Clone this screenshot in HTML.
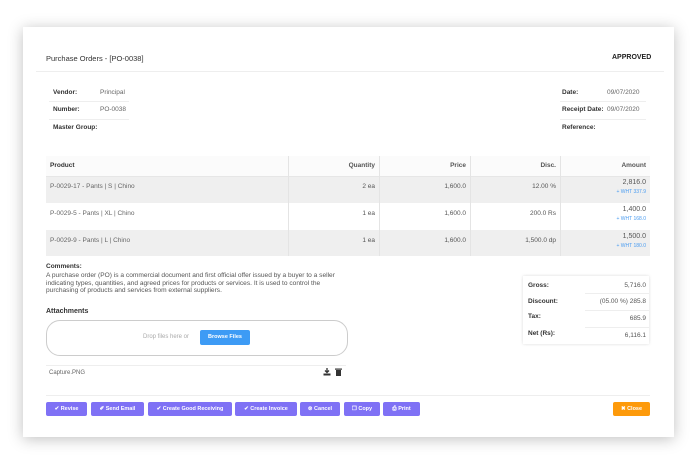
<!DOCTYPE html><html><head><style>
body{margin:0;width:699px;height:466px;background:#fff;font-family:"Liberation Sans",sans-serif;position:relative;overflow:hidden;color:#444}
.card{position:absolute;left:23px;top:27px;width:651px;height:410px;background:#fff;box-shadow:0 2px 14px rgba(0,0,0,.25)}
.a{position:absolute;white-space:nowrap}
.t{font-size:7px;color:#333}
.b{font-weight:bold;font-size:6.5px;color:#333}
.v{font-size:6.5px;color:#666}
.hl{position:absolute;height:1px;background:#eee}
.btn{position:absolute;top:402px;height:14px;background:#7f71f5;color:#fff;font-size:5.5px;font-weight:bold;border-radius:2px;text-align:center;line-height:14px}
.cell{position:absolute;font-size:6.5px;color:#555;text-align:right}
</style></head><body>
<div class="card"></div>
<div class="a t" style="left:46px;top:54px;font-size:7.5px">Purchase Orders - [PO-0038]</div>
<div class="a t" style="left:612px;top:54px;font-size:7px;font-weight:bold;color:#222">APPROVED</div>
<div class="hl" style="left:36px;top:71px;width:628px"></div>
<div class="a b" style="left:53px;top:89px">Vendor:</div><div class="a v" style="left:100px;top:89px">Principal</div>
<div class="hl" style="left:49px;top:101px;width:80px"></div>
<div class="a b" style="left:53px;top:106px">Number:</div><div class="a v" style="left:100px;top:106px">PO-0038</div>
<div class="hl" style="left:49px;top:119px;width:80px"></div>
<div class="a b" style="left:53px;top:124px">Master Group:</div>
<div class="a b" style="left:562px;top:89px">Date:</div><div class="a v" style="left:607px;top:89px">09/07/2020</div>
<div class="hl" style="left:560px;top:101px;width:86px"></div>
<div class="a b" style="left:562px;top:106px">Receipt Date:</div><div class="a v" style="left:607px;top:106px">09/07/2020</div>
<div class="hl" style="left:560px;top:119px;width:86px"></div>
<div class="a b" style="left:562px;top:124px">Reference:</div>
<div style="position:absolute;left:46px;top:156px;width:604px;height:20px;background:#fbfbfb;border-bottom:1px solid #e6e6e6"></div>
<div style="position:absolute;left:46px;top:177px;width:604px;height:26px;background:#efefef"></div>
<div style="position:absolute;left:46px;top:230px;width:604px;height:26px;background:#efefef"></div>
<div style="position:absolute;left:288px;top:156px;width:1px;height:100px;background:#e4e4e4"></div>
<div style="position:absolute;left:379px;top:156px;width:1px;height:100px;background:#e4e4e4"></div>
<div style="position:absolute;left:470px;top:156px;width:1px;height:100px;background:#e4e4e4"></div>
<div style="position:absolute;left:560px;top:156px;width:1px;height:100px;background:#e4e4e4"></div>
<div class="a b" style="left:50px;top:162px">Product</div>
<div class="cell b" style="left:290px;width:85px;top:162px">Quantity</div>
<div class="cell b" style="left:381px;width:85px;top:162px">Price</div>
<div class="cell b" style="left:472px;width:84px;top:162px">Disc.</div>
<div class="cell b" style="left:562px;width:84px;top:162px">Amount</div>

<div class="a v" style="left:50px;top:183px">P-0029-17 - Pants | S | Chino</div>
<div class="cell" style="left:290px;width:85px;top:183px">2 ea</div>
<div class="cell" style="left:381px;width:85px;top:183px">1,600.0</div>
<div class="cell" style="left:472px;width:84px;top:183px">12.00 %</div>
<div class="cell" style="left:562px;width:84px;top:179px;font-size:7px">2,816.0</div>
<div class="cell" style="left:562px;width:84px;top:189px;font-size:5px;color:#4a9cf0">+ WHT 337.9</div>

<div class="a v" style="left:50px;top:210px">P-0029-5 - Pants | XL | Chino</div>
<div class="cell" style="left:290px;width:85px;top:210px">1 ea</div>
<div class="cell" style="left:381px;width:85px;top:210px">1,600.0</div>
<div class="cell" style="left:472px;width:84px;top:210px">200.0 Rs</div>
<div class="cell" style="left:562px;width:84px;top:206px;font-size:7px">1,400.0</div>
<div class="cell" style="left:562px;width:84px;top:216px;font-size:5px;color:#4a9cf0">+ WHT 168.0</div>

<div class="a v" style="left:50px;top:237px">P-0029-9 - Pants | L | Chino</div>
<div class="cell" style="left:290px;width:85px;top:237px">1 ea</div>
<div class="cell" style="left:381px;width:85px;top:237px">1,600.0</div>
<div class="cell" style="left:472px;width:84px;top:237px">1,500.0 dp</div>
<div class="cell" style="left:562px;width:84px;top:233px;font-size:7px">1,500.0</div>
<div class="cell" style="left:562px;width:84px;top:243px;font-size:5px;color:#4a9cf0">+ WHT 180.0</div>

<div class="a b" style="left:46px;top:263px">Comments:</div>
<div class="a v" style="left:46px;top:272px;line-height:7.7px;font-size:6.6px;color:#555">A purchase order (PO) is a commercial document and first official offer issued by a buyer to a seller<br>indicating types, quantities, and agreed prices for products or services. It is used to control the<br>purchasing of products and services from external suppliers.</div>
<div class="a b" style="left:46px;top:308px;font-size:7px">Attachments</div>
<div style="position:absolute;left:46px;top:320px;width:300px;height:34px;border:1px solid #ccc;border-radius:14px"></div>
<div class="a v" style="left:143px;top:334px;color:#aaa;font-size:6px">Drop files here or</div>
<div style="position:absolute;left:200px;top:330px;width:50px;height:15px;background:#3d9bf5;border-radius:2px;color:#fff;font-size:5.5px;font-weight:bold;text-align:center;line-height:15px">Browse Files</div>
<div class="hl" style="left:46px;top:365px;width:300px"></div>
<div class="a v" style="left:49px;top:370px;font-size:6px">Capture.PNG</div>
<svg style="position:absolute;left:323px;top:368px" width="8" height="8" viewBox="0 0 8 8"><path d="M4 0v4M2 2.5L4 4.5 6 2.5" stroke="#333" stroke-width="1.3" fill="none"/><rect x="0.5" y="5.5" width="7" height="2" fill="#333"/></svg>
<svg style="position:absolute;left:335px;top:368px" width="7" height="8" viewBox="0 0 7 8"><rect x="0" y="0.5" width="7" height="1.2" fill="#333"/><rect x="1" y="2" width="5" height="6" fill="#333"/></svg>
<div style="position:absolute;left:523px;top:276px;width:126px;height:68px;box-shadow:0 0 3px rgba(0,0,0,.15)"></div>
<div class="a b" style="left:528px;top:282px">Gross:</div><div class="cell" style="left:585px;width:61px;top:282px">5,716.0</div>
<div class="hl" style="left:585px;top:293px;width:64px"></div>
<div class="a b" style="left:528px;top:298px">Discount:</div><div class="cell" style="left:570px;width:76px;top:298px">(05.00 %) 285.8</div>
<div class="hl" style="left:585px;top:310px;width:64px"></div>
<div class="a b" style="left:528px;top:313px">Tax:</div><div class="cell" style="left:585px;width:61px;top:315px">685.9</div>
<div class="hl" style="left:585px;top:327px;width:64px"></div>
<div class="a b" style="left:528px;top:330px">Net (Rs):</div><div class="cell" style="left:585px;width:61px;top:332px">6,116.1</div>

<div class="hl" style="left:46px;top:395px;width:604px"></div>
<div class="btn" style="left:46px;width:41px">✔ Revise</div>
<div class="btn" style="left:91px;width:53px">✐ Send Email</div>
<div class="btn" style="left:148px;width:84px">✔ Create Good Receiving</div>
<div class="btn" style="left:235px;width:62px">✔ Create Invoice</div>
<div class="btn" style="left:300px;width:40px">⊗ Cancel</div>
<div class="btn" style="left:344px;width:36px">❐ Copy</div>
<div class="btn" style="left:383px;width:37px">⎙ Print</div>
<div class="btn" style="left:613px;width:37px;background:#fd9a0b">✖ Close</div>
</body></html>
